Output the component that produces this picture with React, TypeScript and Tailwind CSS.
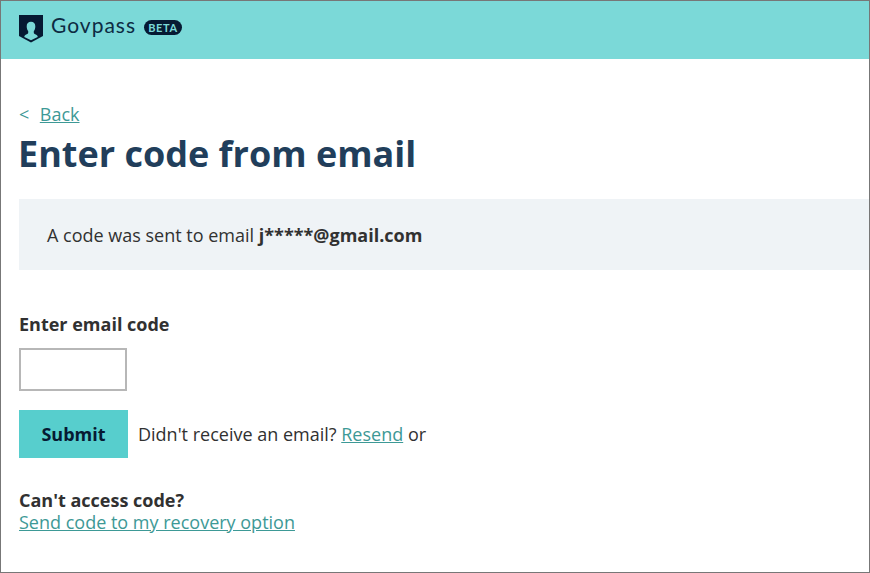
export default function App() {
  return (
    <div className="box-border flex h-[573px] w-[870px] flex-col overflow-hidden border border-[#777777] bg-white font-['Open_Sans',sans-serif] text-[18px] leading-6 text-[#313131]">
      <header className="flex h-[58px] shrink-0 items-start bg-[#7bd9d8] pl-[18px] pt-[12px]">
        <svg className="mt-0.5 h-[28px] w-6" viewBox="0 0 24 28" fill="none">
          <path d="M0 0h24v21l-12 6.500-12-6.500Z" fill="#061a33" />
          <path d="M12 6.800c-2.700 0-4.300 1.700-4.300 4.400 0 2.200.5 3.800 1.500 4.900v2c-.3 1.200-2.300 1.400-3.400 2.400-.4.400-.5.900-.5 1.400l6.700 3.300 6.700-3.300c0-.5-.1-1-.5-1.400-1.100-1-3.100-1.200-3.400-2.400v-2c1-1.100 1.500-2.700 1.500-4.900 0-2.700-1.600-4.400-4.300-4.400Z" fill="#7bd9d8" />
        </svg>
        <span className="ml-2 w-[85px] font-['Lato'] text-[21px] tracking-[1px] text-[#0d2b43]">Govpass</span>
        <span className="ml-2 mt-[7px] flex h-[15px] w-[38px] items-center justify-center rounded-full bg-[#061a33] font-['Lato'] text-[11px] font-bold tracking-[0.6px] text-[#7bd9d8]">BETA</span>
      </header>
      <main className="flex flex-col items-start pl-[18px] pt-[43px]">
        <div className="flex gap-[10.500px] text-[#3d9996]"><span>&lt;</span><a className="underline">Back</a></div>
        <h1 className="-ml-px mt-[4px] whitespace-nowrap text-[36px] font-bold leading-[48px] text-[#213e5b]">Enter code from email</h1>
        <p className="mt-[21px] flex h-[71px] w-full items-center bg-[#eff3f6] pl-7"><span>A code was sent to email <strong>j*****@gmail.com</strong></span></p>
        <label className="mt-[42px] font-bold">Enter email code</label>
        <input className="mt-[12px] h-[43px] w-[108px] border-2 border-[#b7b7b7]" />
        <div className="mt-[19px] flex items-center"><button className="h-12 w-[109px] bg-[#57cecd] font-bold text-[#061a33]">Submit</button><span className="ml-[10px]">Didn't receive an email? <a className="text-[#3d9996] underline">Resend</a> or</span></div>
        <strong className="mt-[31px] leading-[22px]">Can't access code?</strong>
        <a className="leading-[22px] text-[#3d9996] underline">Send code to my recovery option</a>
      </main>
    </div>
  );
}
